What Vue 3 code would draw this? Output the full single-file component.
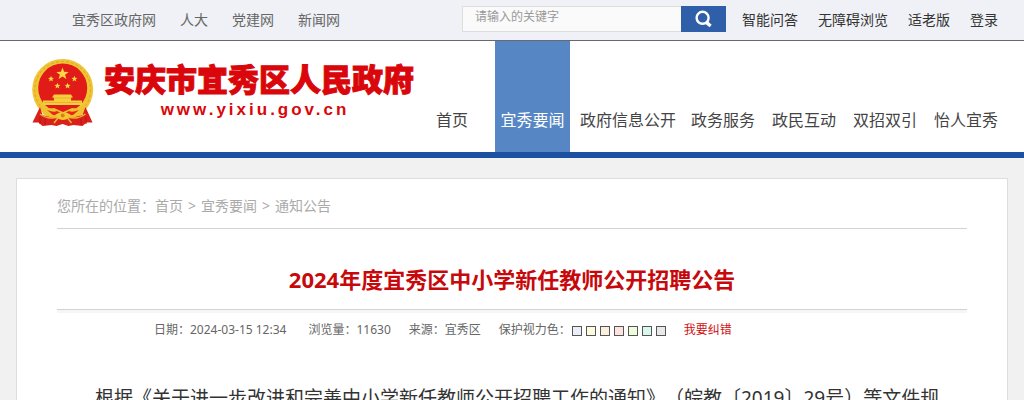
<script setup>
const siteLinks = ['宜秀区政府网', '人大', '党建网', '新闻网']
const tools = ['智能问答', '无障碍浏览', '适老版', '登录']
const nav = [
  { label: '首页' },
  { label: '宜秀要闻', kind: 'active' },
  { label: '政府信息公开', kind: 'after' },
  { label: '政务服务', kind: 'near' },
  { label: '政民互动' },
  { label: '双招双引' },
  { label: '怡人宜秀' }
]
const colors = ['#eaeef9', '#fbfbdd', '#fcefdd', '#fde3de', '#edfcdb', '#d6f8ef', '#e9e9eb']
const smallStars = [[20, 20.7], [43.4, 20.7], [26.4, 27.7], [36.6, 27.7]]
</script>

<template>
  <div class="page">
    <div class="topbar">
      <nav class="sites"><a v-for="s in siteLinks" :key="s" href="#">{{ s }}</a></nav>
      <form class="search" @submit.prevent>
        <input type="text" placeholder="请输入的关键字" aria-label="请输入的关键字">
        <button type="submit" aria-label="搜索">
          <svg viewBox="0 0 18 18" width="18" height="18"><circle cx="7.6" cy="7.8" r="6" fill="none" stroke="#fff" stroke-width="2.4" /><path d="M11.4 12.4 15.6 16" stroke="#fff" stroke-width="3.4" /></svg>
        </button>
      </form>
      <nav class="tools"><a v-for="t in tools" :key="t" href="#">{{ t }}</a></nav>
    </div>

    <header class="header">
      <a class="brand" href="#">
        <svg class="emblem" viewBox="0 0 64 70" width="64" height="70" aria-hidden="true">
          <circle cx="31.7" cy="31.5" r="30.5" fill="#f0c535" />
          <circle cx="31.7" cy="31.5" r="28" fill="none" stroke="#dca52a" stroke-width="1" stroke-dasharray="3 2" />
          <circle cx="31.7" cy="30" r="24.5" fill="#e11b18" />
          <path d="M31.5 9.4l1.6 4.3 4.6.2-3.6 2.8 1.3 4.4-3.9-2.5-3.9 2.5 1.3-4.4-3.6-2.8 4.6-.2z" fill="#f8d743" />
          <path v-for="(p, i) in smallStars" :key="i" :transform="`translate(${p[0]} ${p[1]})`" d="M0-3 .8-.9 3-.8 1.3.6 1.9 2.7 0 1.5-1.9 2.7-1.3.6-3-.8-.8-.9z" fill="#f8d743" />
          <path d="M23 36.5h17l2 3h-2v3h11v4.500H12v-4.500h11v-3h-2z" fill="#f5cf3c" />
          <path d="M22 40h19M13 44.500h37" stroke="#e2a530" stroke-width=".7" />
          <path d="M9 47q6 4 14 3l9 4 9-4q8 1 14-3l-3 9-10 6H22l-10-6z" fill="#f0c02f" />
          <path d="M16 52q7 3 10 1l6 3 6-3q3 2 10-1l-6 5-10 1-10-1z" fill="#e4281a" />
          <path d="M9 49 1.500 64.500l6 0 4 3.500 9-1 5 1 6-2 6 2 5-1 9 1 4-3.500 6 0L54.500 49l-3 8-11 3-9 1-9-1-11-3z" fill="#d9201b" />
          <path d="M24 57q8-6 16 0l-2 3q-6 4-12 0z" fill="#f3c933" />
          <circle cx="31.7" cy="57.500" r="2" fill="#db7d22" />
          <path d="M9 56q8 6 17 3M54.500 56q-8 6-17 3M27 60l-4 5M36.500 60l4 5" fill="none" stroke="#eeb52e" stroke-width="1.5" />
          <path d="M9 59v7M14 61v6M50 61v6M55 59v7" stroke="#b81318" stroke-width="1" />
        </svg>
        <span class="names"><strong>安庆市宜秀区人民政府</strong><span class="url">www.yixiu.gov.cn</span></span>
      </a>
      <nav class="nav"><a v-for="n in nav" :key="n.label" href="#" :class="n.kind">{{ n.label }}</a></nav>
    </header>

    <main class="card">
      <div class="crumbs">您所在的位置：<a href="#">首页</a><i>&gt;</i><a href="#">宜秀要闻</a><i>&gt;</i><a href="#">通知公告</a></div>
      <h1>2024年度宜秀区中小学新任教师公开招聘公告</h1>
      <div class="meta">
        <span class="date">日期：2024-03-15 12:34</span>
        <span>浏览量：11630</span>
        <span>来源：宜秀区</span>
        <span class="eye">保护视力色：<button v-for="c in colors" :key="c" type="button" :aria-label="c" :style="{ backgroundColor: c }"></button></span>
        <a href="#">我要纠错</a>
      </div>
      <p>根据《关于进一步改进和完善中小学新任教师公开招聘工作的通知》（皖教〔2019〕29号）等文件规</p>
    </main>
  </div>
</template>

<style>
body { margin: 0; background: #f1f1f1; overflow: hidden; }
</style>
<style scoped>
* { box-sizing: border-box; }
.page { font-family: "Noto Sans", "Noto Sans CJK SC", sans-serif; font-size: 14px; color: #666; text-spacing-trim: space-all; }
a { color: inherit; text-decoration: none; white-space: nowrap; }
.topbar { display: flex; height: 41px; padding: 0 26px 0 72px; background: #eff1f6; border-bottom: 1px solid #68696e; line-height: 40px; }
.sites { display: flex; gap: 24px; }
.search { display: flex; height: 26px; margin: 6px 16px 0 auto; }
.search input { width: 219px; height: 26px; padding: 0 12px 5px; border: 1px solid #ddd; border-right: 0; background: #fafafa; font: inherit; font-size: 12px; outline: 0; border-radius: 0; }
.search input::placeholder { color: #999; opacity: 1; }
.search button { display: flex; align-items: center; justify-content: center; width: 45px; padding: 0; border: 0; background: #2e5fa8; }
.tools { display: flex; gap: 20px; color: #333; }
.header { display: flex; justify-content: space-between; height: 117px; padding: 0 26px 0 31px; background: #fff; border-bottom: 6px solid #1c50a0; }
.brand { display: flex; align-items: flex-start; gap: 9px; padding-top: 17px; color: #d9070b; }
.names { display: flex; flex-direction: column; align-items: center; }
.names strong { font-size: 31px; line-height: 42px; font-weight: 900; -webkit-text-stroke: 1px #d9070b; }
.url { margin-right: 8px; font: bold 17px/20px "Liberation Sans", sans-serif; letter-spacing: 3px; }
.nav { display: flex; font-size: 16px; line-height: 24px; color: #444; }
.nav a { padding-top: 67px; margin-left: 17px; }
.nav .active { width: 75px; margin-left: 27px; background: #5686c4; color: #fff; text-align: center; }
.nav .after { margin-left: 10px; }
.nav .near { margin-left: 15px; }
.card { margin: 20px 16px 0; padding: 0 40px; background: #fff; border: 1px solid #ddd; }
.crumbs { height: 50px; line-height: 54px; color: #aaa; border-bottom: 1px solid #d3d3d3; }
.crumbs i { margin: 0 5px; font-style: normal; }
h1 { margin: 0; padding: 30px 0 10px; font-size: 22px; line-height: 40px; text-align: center; color: #c7090c; }
.meta { display: flex; gap: 18px; padding: 6px 0 0 97px; border-top: 1px solid #d3d3d3; box-shadow: inset 0 3px #f6f6f6; font-size: 12px; line-height: 28px; white-space: nowrap; }
.date { margin-right: 4px; }
.eye { display: flex; align-items: center; }
.eye button { width: 10px; height: 10px; margin: 2px 4px 0 0; padding: 0; border: 1px solid #555; border-radius: 0; }
.eye button:first-of-type { margin-left: 1px; }
.eye button:last-child { margin-right: 0; }
.meta a { color: #d01113; }
p { margin: 34px 0 0; padding-left: 38px; font-size: 19px; line-height: 40px; color: #333; white-space: nowrap; }
</style>
